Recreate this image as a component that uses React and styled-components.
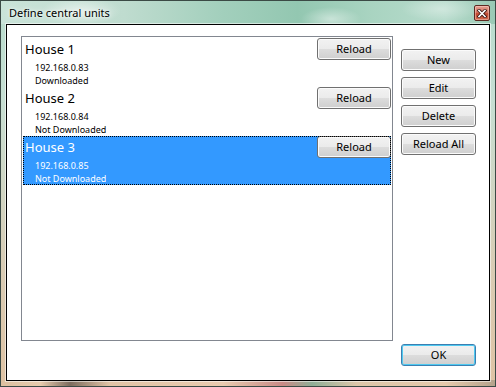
import React from "react";
import styled, { createGlobalStyle } from "styled-components";

const Global = createGlobalStyle`
  html, body { margin: 0; padding: 0; background: #ffffff; }
  body { font-family: "Noto Sans", "DejaVu Sans", sans-serif; }
  * { box-sizing: border-box; }
`;

const Window = styled.div`
  width: 496px;
  height: 387px;
  border: 1px solid #3b4a45;
  display: flex;
  flex-direction: column;
  background:
    linear-gradient(to right, #dcbf9f 0%, #e7cbad 8%, #7d6c5e 14%, #e2c4a6 22%, #e9cbaf 45%, #c98a86 57%, #8fae96 63%, #ddc6a9 72%, #e6c9ab 90%, #b5a38c 100%) bottom / 100% 6px no-repeat,
    linear-gradient(to bottom, #b7dccc 0%, #c6dfd3 25%, #d9ccb4 70%, #dfc3a4 100%);
`;

const TitleBar = styled.div`
  height: 23px;
  flex: none;
  display: flex;
  align-items: flex-start;
  justify-content: space-between;
  padding: 0 5px 0 8px;
  background:
    radial-gradient(ellipse 40px 14px at 80px 10px, rgba(255,255,255,0.55), rgba(255,255,255,0)),
    radial-gradient(ellipse 30px 12px at 330px 18px, rgba(255,255,255,0.45), rgba(255,255,255,0)),
    radial-gradient(ellipse 40px 12px at 440px 8px, rgba(255,255,255,0.35), rgba(255,255,255,0)),
    linear-gradient(to right, #c9e3d8 0%, #bfdccf 25%, #a2cfbc 45%, #93c7b1 60%, #a9d4c1 75%, #b7dbcc 90%, #99c9b4 100%);
`;

const Caption = styled.span`
  font-size: 11px;
  line-height: 23px;
  color: #000;
  text-shadow: 0 0 6px rgba(255,255,255,0.9), 0 0 3px rgba(255,255,255,0.8);
`;

const CloseBox = styled.div`
  margin-top: 4px;
  width: 16px;
  height: 16px;
  border: 1px solid #5e2a22;
  border-radius: 2px;
  background: linear-gradient(to bottom, #e5a192 0%, #d47563 45%, #c2472f 55%, #d16a4f 100%);
  box-shadow: inset 0 0 0 1px rgba(255,220,210,0.45);
  display: flex;
  align-items: center;
  justify-content: center;
`;

const Client = styled.div`
  flex: 1;
  margin: 0 5px 5px 5px;
  border: 1px solid #000;
  box-shadow: 0 0 0 1px rgba(255,255,255,0.55);
  background: #ffffff;
  padding: 11px 13px 14px 14px;
  display: flex;
  flex-direction: column;
`;

const Main = styled.div`
  display: flex;
  gap: 8px;
`;

const List = styled.div`
  width: 372px;
  height: 305px;
  border: 1px solid #828790;
  padding: 1px;
  display: flex;
  flex-direction: column;
`;

const Row = styled.div`
  height: 49px;
  flex: none;
  background: ${(p) => (p.$selected ? "#3399ff" : "transparent")};
  color: ${(p) => (p.$selected ? "#ffffff" : "#000000")};
  outline: ${(p) => (p.$selected ? "1px dotted #000" : "none")};
  outline-offset: -1px;
  display: flex;
  flex-direction: column;
`;

const RowHead = styled.div`
  display: flex;
  justify-content: space-between;
  align-items: flex-start;
  height: 22px;
  padding-left: 2px;
`;

const RowTitle = styled.span`
  font-size: 13px;
  line-height: 22px;
`;

const Details = styled.div`
  padding: 1px 0 0 12px;
  font-size: 9px;
  line-height: 13px;
`;

const Button = styled.button`
  width: ${(p) => p.$w || 75}px;
  height: 22px;
  flex: none;
  padding: 0;
  font-family: "Noto Sans", "DejaVu Sans", sans-serif;
  font-size: 11px;
  color: #000;
  border: 1px solid ${(p) => (p.$default ? "#3c7fb1" : "#707070")};
  border-radius: 3px;
  background: linear-gradient(to bottom, #f2f2f2 0%, #ebebeb 50%, #dddddd 50%, #cfcfcf 100%);
  box-shadow: inset 0 0 0 1px ${(p) => (p.$default ? "#4fc9f0" : "#fbfbfb")};
  line-height: 20px;
`;

const Side = styled.div`
  margin-top: 13px;
  display: flex;
  flex-direction: column;
  gap: 6px;
`;

const Footer = styled.div`
  margin-top: 3px;
  display: flex;
  justify-content: flex-end;
`;

const units = [
  { name: "House 1", ip: "192.168.0.83", status: "Downloaded" },
  { name: "House 2", ip: "192.168.0.84", status: "Not Downloaded" },
  { name: "House 3", ip: "192.168.0.85", status: "Not Downloaded", selected: true },
];

export default function App() {
  return (
    <>
      <Global />
      <Window>
        <TitleBar>
          <Caption>Define central units</Caption>
          <CloseBox>
            <svg width="10" height="9" viewBox="0 0 10 9">
              <path d="M2 1.5 L8 7.5 M8 1.5 L2 7.5" stroke="#3a1510" strokeWidth="3.2" strokeLinecap="square" />
              <path d="M2 1.5 L8 7.5 M8 1.5 L2 7.5" stroke="#ffffff" strokeWidth="1.6" strokeLinecap="square" />
            </svg>
          </CloseBox>
        </TitleBar>
        <Client>
          <Main>
            <List>
              {units.map((u) => (
                <Row key={u.name} $selected={u.selected}>
                  <RowHead>
                    <RowTitle>{u.name}</RowTitle>
                    <Button $w={74}>Reload</Button>
                  </RowHead>
                  <Details>
                    <div>{u.ip}</div>
                    <div>{u.status}</div>
                  </Details>
                </Row>
              ))}
            </List>
            <Side>
              <Button>New</Button>
              <Button>Edit</Button>
              <Button>Delete</Button>
              <Button>Reload All</Button>
            </Side>
          </Main>
          <Footer>
            <Button $default>OK</Button>
          </Footer>
        </Client>
      </Window>
    </>
  );
}
